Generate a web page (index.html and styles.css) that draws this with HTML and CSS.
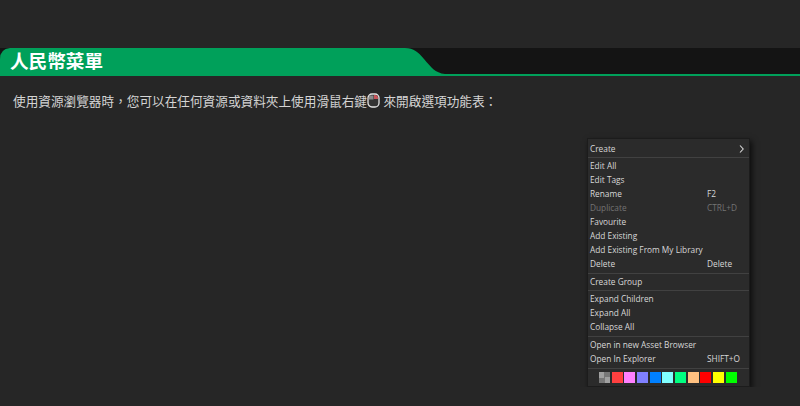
FILE: index.html
```html
<!DOCTYPE html>
<html lang="zh-Hant">
<head>
  <meta charset="UTF-8">
  <meta name="viewport" content="width=device-width, initial-scale=1.0">
  <title>人民幣菜單</title>
  <link rel="stylesheet" href="styles.css">
</head>
<body>
  <div class="title-band">
    <h2 class="title-tab">人民幣菜單</h2>
  </div>

  <p class="intro">使用資源瀏覽器時，您可以在任何資源或資料夾上使用滑鼠右鍵<svg class="mouse-icon" width="13" height="15" viewBox="0 0 13 15"><rect x="1" y="1" width="11" height="13" rx="4" fill="#333" stroke="#e4e4e4" stroke-width="1.300"/><path d="M7 2h1a3 3 0 0 1 3 3v1H7z" fill="#c9545a"/><path d="M2 2.500h4.500V6.500H2z" fill="#8a8a8a"/></svg> 來開啟選項功能表：</p>

  <div class="context-menu">
    <div class="menu-group first">
      <div class="menu-item"><span>Create</span><svg class="arrow" width="5" height="8" viewBox="0 0 5 8"><path d="M1 .5 4.200 4 1 7.500" fill="none" stroke="#d8d8d8" stroke-width="1.100"/></svg></div>
    </div>
    <div class="menu-group">
      <div class="menu-item"><span>Edit All</span></div>
      <div class="menu-item"><span>Edit Tags</span></div>
      <div class="menu-item"><span>Rename</span><span class="shortcut">F2</span></div>
      <div class="menu-item disabled"><span>Duplicate</span><span class="shortcut">CTRL+D</span></div>
      <div class="menu-item"><span>Favourite</span></div>
      <div class="menu-item"><span>Add Existing</span></div>
      <div class="menu-item"><span>Add Existing From My Library</span></div>
      <div class="menu-item"><span>Delete</span><span class="shortcut">Delete</span></div>
    </div>
    <div class="menu-group tight">
      <div class="menu-item"><span>Create Group</span></div>
    </div>
    <div class="menu-group">
      <div class="menu-item"><span>Expand Children</span></div>
      <div class="menu-item"><span>Expand All</span></div>
      <div class="menu-item"><span>Collapse All</span></div>
    </div>
    <div class="menu-group">
      <div class="menu-item"><span>Open in new Asset Browser</span></div>
      <div class="menu-item"><span>Open In Explorer</span><span class="shortcut">SHIFT+O</span></div>
    </div>
    <div class="swatches">
      <span class="swatch checker"></span>
      <span class="swatch red"></span>
      <span class="swatch pink"></span>
      <span class="swatch violet"></span>
      <span class="swatch blue"></span>
      <span class="swatch cyan"></span>
      <span class="swatch mint"></span>
      <span class="swatch peach"></span>
      <span class="swatch pure-red"></span>
      <span class="swatch yellow"></span>
      <span class="swatch lime"></span>
    </div>
  </div>
</body>
</html>
```
FILE: styles.css
```css
body {
  margin: 0;
  padding-top: 48px;
  background-color: #262626;
  font-family: "Liberation Sans", "Noto Sans CJK TC", sans-serif;
  overflow: hidden;
}

.title-band {
  height: 26px;
  background-color: #141414;
  border-bottom: 2px solid #00a05a;
}

.title-tab {
  width: 445px;
  height: 26px;
  margin: 0;
  padding-left: 10px;
  box-sizing: border-box;
  background-color: #00a05a;
  clip-path: path("M0 26V11Q0 1 10 0H405C414 0 418 4 424 11C431 19 435 25 445 26Z");
  color: #fff;
  font-size: 18.600px;
  font-weight: bold;
  line-height: 27px;
}

.intro {
  display: flex;
  align-items: center;
  margin: 15px 0 0;
  padding-left: 13px;
  height: 18px;
  color: #d4d4d4;
  font-size: 12.650px;
  white-space: pre;
}

.mouse-icon {
  flex: none;
}

.context-menu {
  width: 163px;
  box-sizing: border-box;
  margin: 29px 0 0 587px;
  padding-top: 2px;
  background-color: #2b2b2b;
  border: 1px solid #1c1c1c;
  box-shadow: 2px 3px 6px rgba(0, 0, 0, 0.7);
  color: #d8d8d8;
  font-family: "Open Sans", sans-serif;
  font-size: 8.300px;
}

.menu-group {
  padding: 1px 0 2px;
  border-bottom: 1px solid #414141;
}

.menu-group.first,
.menu-group.tight {
  padding-bottom: 1px;
}

.menu-item {
  display: flex;
  justify-content: space-between;
  align-items: center;
  height: 14px;
  padding: 0 4px 0 2px;
  line-height: 14px;
  white-space: nowrap;
}

.menu-item .shortcut {
  width: 38px;
  flex: none;
}

.menu-item.disabled {
  color: #737373;
}

.arrow {
  margin-right: 1px;
}

.swatches {
  display: flex;
  gap: 1.670px;
  padding: 3px 0 3px 11px;
}

.swatch {
  width: 11px;
  height: 11px;
}

.checker {
  background: conic-gradient(#777 25%, #a0a0a0 0 50%, #777 0 75%, #a0a0a0 0) 0 0 / 11px 11px;
}
.red { background-color: #ff4040; }
.pink { background-color: #ff80ff; }
.violet { background-color: #8080ff; }
.blue { background-color: #0080ff; }
.cyan { background-color: #80ffff; }
.mint { background-color: #00ff80; }
.peach { background-color: #ffc080; }
.pure-red { background-color: #ff0000; }
.yellow { background-color: #ffff00; }
.lime { background-color: #00ff00; }
```
